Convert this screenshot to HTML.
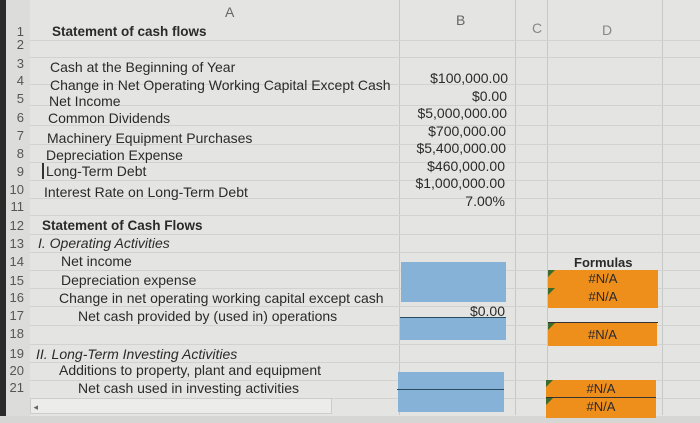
<!DOCTYPE html>
<html><head><style>
body{margin:0;width:700px;height:423px;overflow:hidden;background:#e4e4e2;font-family:"Liberation Sans",sans-serif;position:relative;color:#2a2a2a}
.t{position:absolute;font-size:14px;white-space:nowrap;line-height:16px}
.n{position:absolute;font-size:13px;color:#555;line-height:16px;width:16px;text-align:right}
.r{position:absolute;font-size:14px;line-height:16px;text-align:right;width:150px}
.v{position:absolute;width:1px;background:#c8c8c6}
.h{position:absolute;height:1px;background:#d2d2d0;left:30px;width:670px}
.b{position:absolute;background:#86b2d8}
.o{position:absolute;background:#ee8f1c;font-size:13px;text-align:center;line-height:18px}
.g{position:absolute;width:0;height:0;border-top:7px solid #3c6b2c;border-right:7px solid transparent}
</style></head><body>
<div style="position:absolute;left:0;top:0;width:6px;height:423px;background:#2a2a2a"></div>
<div style="position:absolute;left:6px;top:0;width:24px;height:423px;background:#dcdcda"></div>
<div style="position:absolute;left:0;top:416px;width:700px;height:7px;background:#d6d6d4"></div>
<div class="v" style="left:399px;top:0;height:415px"></div>
<div class="v" style="left:515px;top:0;height:415px"></div>
<div class="v" style="left:547px;top:0;height:415px"></div>
<div class="v" style="left:662px;top:0;height:415px"></div>
<div class="h" style="top:40px"></div><div class="h" style="top:57px"></div><div class="h" style="top:84px"></div>
<div class="h" style="top:105px"></div><div class="h" style="top:125px"></div><div class="h" style="top:144px"></div>
<div class="h" style="top:162px"></div><div class="h" style="top:180px"></div><div class="h" style="top:198px"></div>
<div class="h" style="top:215px"></div><div class="h" style="top:234px"></div><div class="h" style="top:252px"></div>
<div class="h" style="top:270px"></div><div class="h" style="top:288px"></div><div class="h" style="top:306px"></div>
<div class="h" style="top:325px"></div><div class="h" style="top:344px"></div><div class="h" style="top:362px"></div>
<div class="h" style="top:380px"></div><div class="h" style="top:398px"></div>
<div class="t" style="left:225px;top:4px;color:#666">A</div>
<div class="t" style="left:456px;top:12px;color:#666">B</div>
<div class="t" style="left:532px;top:20px;color:#888">C</div>
<div class="t" style="left:602px;top:22px;color:#888">D</div>

<div class="n" style="left:8px;top:24px">1</div><div class="t" style="left:52px;top:24px;font-weight:bold;font-size:13.5px">Statement of cash flows</div>
<div class="n" style="left:8px;top:37px">2</div>
<div class="n" style="left:8px;top:56px">3</div><div class="t" style="left:50px;top:59px">Cash at the Beginning of Year</div>
<div class="n" style="left:8px;top:73px">4</div><div class="t" style="left:50px;top:77px">Change in Net Operating Working Capital Except Cash</div>
<div class="n" style="left:8px;top:91px">5</div><div class="t" style="left:49px;top:93px">Net Income</div>
<div class="n" style="left:8px;top:110px">6</div><div class="t" style="left:48px;top:110px">Common Dividends</div>
<div class="n" style="left:8px;top:128px">7</div><div class="t" style="left:47px;top:130px">Machinery Equipment Purchases</div>
<div class="n" style="left:8px;top:146px">8</div><div class="t" style="left:46px;top:147px">Depreciation Expense</div>
<div class="n" style="left:8px;top:164px">9</div><div class="t" style="left:42px;top:163px;border-left:2px solid #333;padding-left:2px">Long-Term Debt</div>
<div class="n" style="left:8px;top:182px">10</div><div class="t" style="left:44px;top:184px">Interest Rate on Long-Term Debt</div>
<div class="n" style="left:8px;top:199px">11</div>

<div class="r" style="left:358px;top:70px">$100,000.00</div>
<div class="r" style="left:357px;top:88px">$0.00</div>
<div class="r" style="left:357px;top:105px">$5,000,000.00</div>
<div class="r" style="left:356px;top:123px">$700,000.00</div>
<div class="r" style="left:356px;top:140px">$5,400,000.00</div>
<div class="r" style="left:355px;top:158px">$460,000.00</div>
<div class="r" style="left:355px;top:175px">$1,000,000.00</div>
<div class="r" style="left:355px;top:193px">7.00%</div>

<div class="n" style="left:8px;top:218px">12</div><div class="t" style="left:42px;top:218px;font-weight:bold;font-size:13.5px">Statement of Cash Flows</div>
<div class="n" style="left:8px;top:236px">13</div><div class="t" style="left:38px;top:235px;font-style:italic">I. Operating Activities</div>
<div class="n" style="left:8px;top:254px">14</div><div class="t" style="left:61px;top:253px">Net income</div>
<div class="n" style="left:8px;top:273px">15</div><div class="t" style="left:61px;top:272px">Depreciation expense</div>
<div class="n" style="left:8px;top:290px">16</div><div class="t" style="left:59px;top:290px">Change in net operating working capital except cash</div>
<div class="n" style="left:8px;top:308px">17</div><div class="t" style="left:78px;top:308px">Net cash provided by (used in) operations</div>
<div class="n" style="left:8px;top:326px">18</div>
<div class="n" style="left:8px;top:346px">19</div><div class="t" style="left:36px;top:346px;font-style:italic">II. Long-Term Investing Activities</div>
<div class="n" style="left:8px;top:363px">20</div><div class="t" style="left:59px;top:362px">Additions to property, plant and equipment</div>
<div class="n" style="left:8px;top:380px">21</div><div class="t" style="left:78px;top:380px">Net cash used in investing activities</div>
<div class="t" style="left:30px;top:398px;width:300px;height:14px;border:1px solid #ccc;background:#ececea;font-size:9px;color:#666">&nbsp;◂</div>

<div class="b" style="left:401px;top:262px;width:105px;height:40px"></div>
<div class="r" style="left:355px;top:303px">$0.00</div>
<div style="position:absolute;left:400px;top:317px;width:106px;height:1px;background:#2a4a60"></div>
<div class="b" style="left:400px;top:318px;width:106px;height:22px"></div>
<div class="b" style="left:398px;top:372px;width:106px;height:40px"></div>
<div style="position:absolute;left:397px;top:389px;width:107px;height:1px;background:#2a4a60"></div>

<div class="t" style="left:574px;top:255px;font-weight:bold;font-size:13px">Formulas</div>
<div class="o" style="left:548px;top:270px;width:110px;height:38px">#N/A<br>#N/A</div>
<div class="g" style="left:548px;top:270px"></div><div class="g" style="left:548px;top:288px"></div>
<div style="position:absolute;left:548px;top:322px;width:110px;height:1px;background:#333"></div>
<div class="o" style="left:548px;top:323px;width:109px;height:23px;line-height:23px">#N/A</div>
<div class="g" style="left:548px;top:323px"></div>
<div class="o" style="left:546px;top:380px;width:110px;height:38px">#N/A<br>#N/A</div>
<div class="g" style="left:546px;top:380px"></div><div class="g" style="left:546px;top:398px"></div>
<div style="position:absolute;left:546px;top:397px;width:110px;height:1px;background:#333"></div>
</body></html>
